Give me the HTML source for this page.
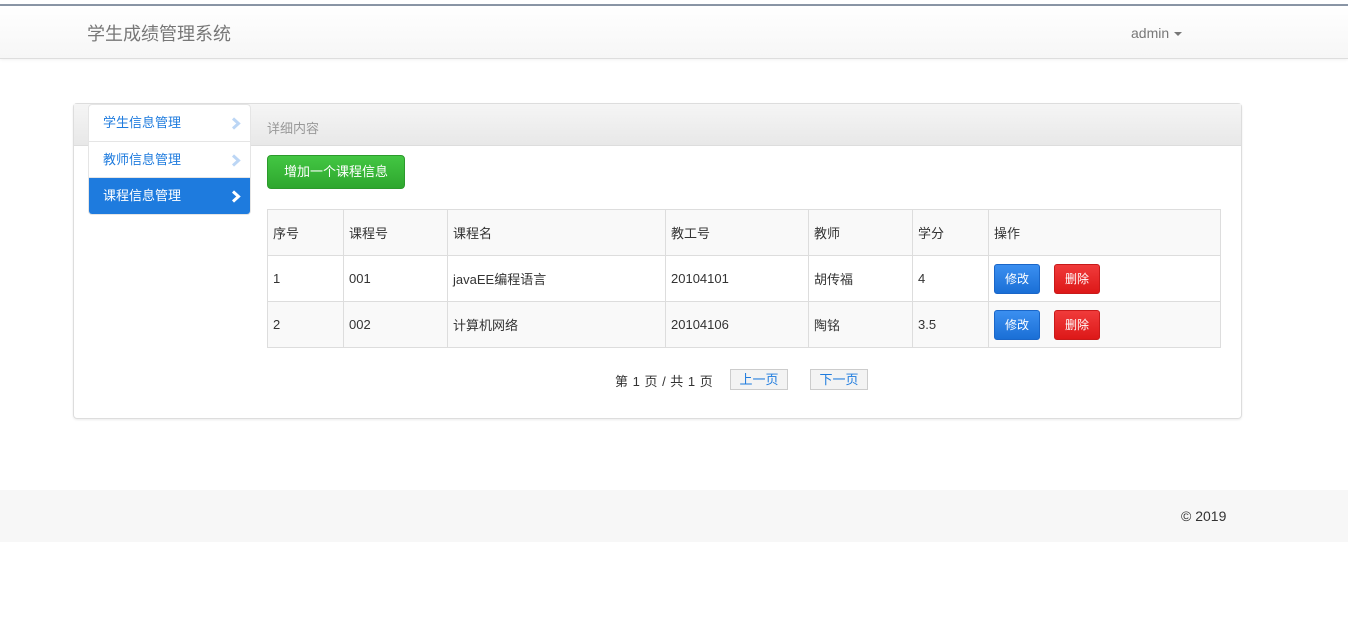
<!DOCTYPE html>
<html><head><meta charset="utf-8"><style>
*{box-sizing:border-box;margin:0;padding:0}
body{width:1348px;height:620px;background:#fff;font-family:"Liberation Sans","Noto Sans CJK SC",sans-serif;font-size:13px;color:#333;position:relative;overflow:hidden}
.topline{position:absolute;left:0;top:4px;width:1348px;height:2px;background:#8a96a6}
.nav{position:absolute;left:0;top:6px;width:1348px;height:53px;background:linear-gradient(#fff,#f6f6f6);border-bottom:1px solid #ddd;box-shadow:0 1px 3px rgba(0,0,0,.06)}
.brand{position:absolute;left:87px;top:14px;font-size:18px;color:#777}
.admin{position:absolute;left:1131px;top:19px;font-size:14px;color:#777}
.admin:after{content:"";display:inline-block;margin-left:5px;vertical-align:middle;border-left:4px solid transparent;border-right:4px solid transparent;border-top:4px solid #777}
.panel{position:absolute;left:73px;top:103px;width:1169px;height:316px;border:1px solid #ddd;border-radius:4px;box-shadow:0 1px 2px rgba(0,0,0,.08)}
.ph{height:42px;background:linear-gradient(#f5f5f5,#e8e8e8);border-bottom:1px solid #ddd}
.ph span{position:absolute;left:193px;top:14px;color:#999;font-size:13px}
.side{position:absolute;left:88px;top:104px;width:163px;height:111px;background:#fff;border:1px solid #e5e5e5;border-radius:4px;overflow:hidden}
.side div{height:36.5px;line-height:36px;padding-left:14px;color:#1e7bde;border-bottom:1px solid #e5e5e5;position:relative}
.side div svg{position:absolute;right:9px;top:12px}
.side .act{background:#1e7bde;color:#fff;border:none}
.add{position:absolute;left:267px;top:155px;width:138px;height:34px;border-radius:4px;background:linear-gradient(#43c643,#2ea72e);border:1px solid #2c9a2c;color:#fff;line-height:32px;text-align:center;font-size:13px}
table{position:absolute;left:267px;top:209px;width:954px;border-collapse:collapse}
td{border:1px solid #ddd;height:46px;padding:0 5px;vertical-align:middle}
tr:nth-child(odd){background:#f9f9f9}
tr:nth-child(2){background:#fff}
.b{display:inline-block;width:46px;height:30px;border-radius:3px;color:#fff;font-size:12px;line-height:28px;text-align:center;vertical-align:middle}
.bl{background:linear-gradient(#3b8ff0,#1a6fd6);border:1px solid #1a66c8}
.rd{background:linear-gradient(#f03b3b,#dd1818);border:1px solid #c81a1a;margin-left:14px}
.pg{position:absolute;left:615px;top:371px;font-size:13px;letter-spacing:0.5px}
.pb{position:absolute;top:369px;height:21px;width:58px;border:1px solid #ccc;background:#f3f3f3;color:#1e7bde;text-align:center;line-height:19px}
.foot{position:absolute;left:0;top:490px;width:1348px;height:52px;background:#f7f7f7}
.foot span{position:absolute;left:1181px;top:18px;font-size:14px}
</style></head><body>
<div class="topline"></div>
<div class="nav"><div class="brand">学生成绩管理系统</div><div class="admin">admin</div></div>
<div class="panel"><div class="ph"><span>详细内容</span></div></div>
<div class="side">
<div>学生信息管理<svg width="10" height="13" viewBox="0 0 10 13"><path d="M2 1.5 L7.5 6.5 L2 11.5" fill="none" stroke="#bcd6f5" stroke-width="3"/></svg></div>
<div>教师信息管理<svg width="10" height="13" viewBox="0 0 10 13"><path d="M2 1.5 L7.5 6.5 L2 11.5" fill="none" stroke="#bcd6f5" stroke-width="3"/></svg></div>
<div class="act">课程信息管理<svg width="10" height="13" viewBox="0 0 10 13"><path d="M2 1.5 L7.5 6.5 L2 11.5" fill="none" stroke="#fff" stroke-width="3"/></svg></div>
</div>
<div class="add">增加一个课程信息</div>
<table>
<colgroup><col style="width:76px"><col style="width:104px"><col style="width:218px"><col style="width:143px"><col style="width:104px"><col style="width:76px"><col></colgroup>
<tr><td>序号</td><td>课程号</td><td>课程名</td><td>教工号</td><td>教师</td><td>学分</td><td>操作</td></tr>
<tr><td>1</td><td>001</td><td>javaEE编程语言</td><td>20104101</td><td>胡传福</td><td>4</td><td><span class="b bl">修改</span><span class="b rd">删除</span></td></tr>
<tr><td>2</td><td>002</td><td>计算机网络</td><td>20104106</td><td>陶铭</td><td>3.5</td><td><span class="b bl">修改</span><span class="b rd">删除</span></td></tr>
</table>
<div class="pg">第 1 页 / 共 1 页</div>
<div class="pb" style="left:730px">上一页</div>
<div class="pb" style="left:810px">下一页</div>
<div class="foot"><span>© 2019</span></div>
</body></html>
